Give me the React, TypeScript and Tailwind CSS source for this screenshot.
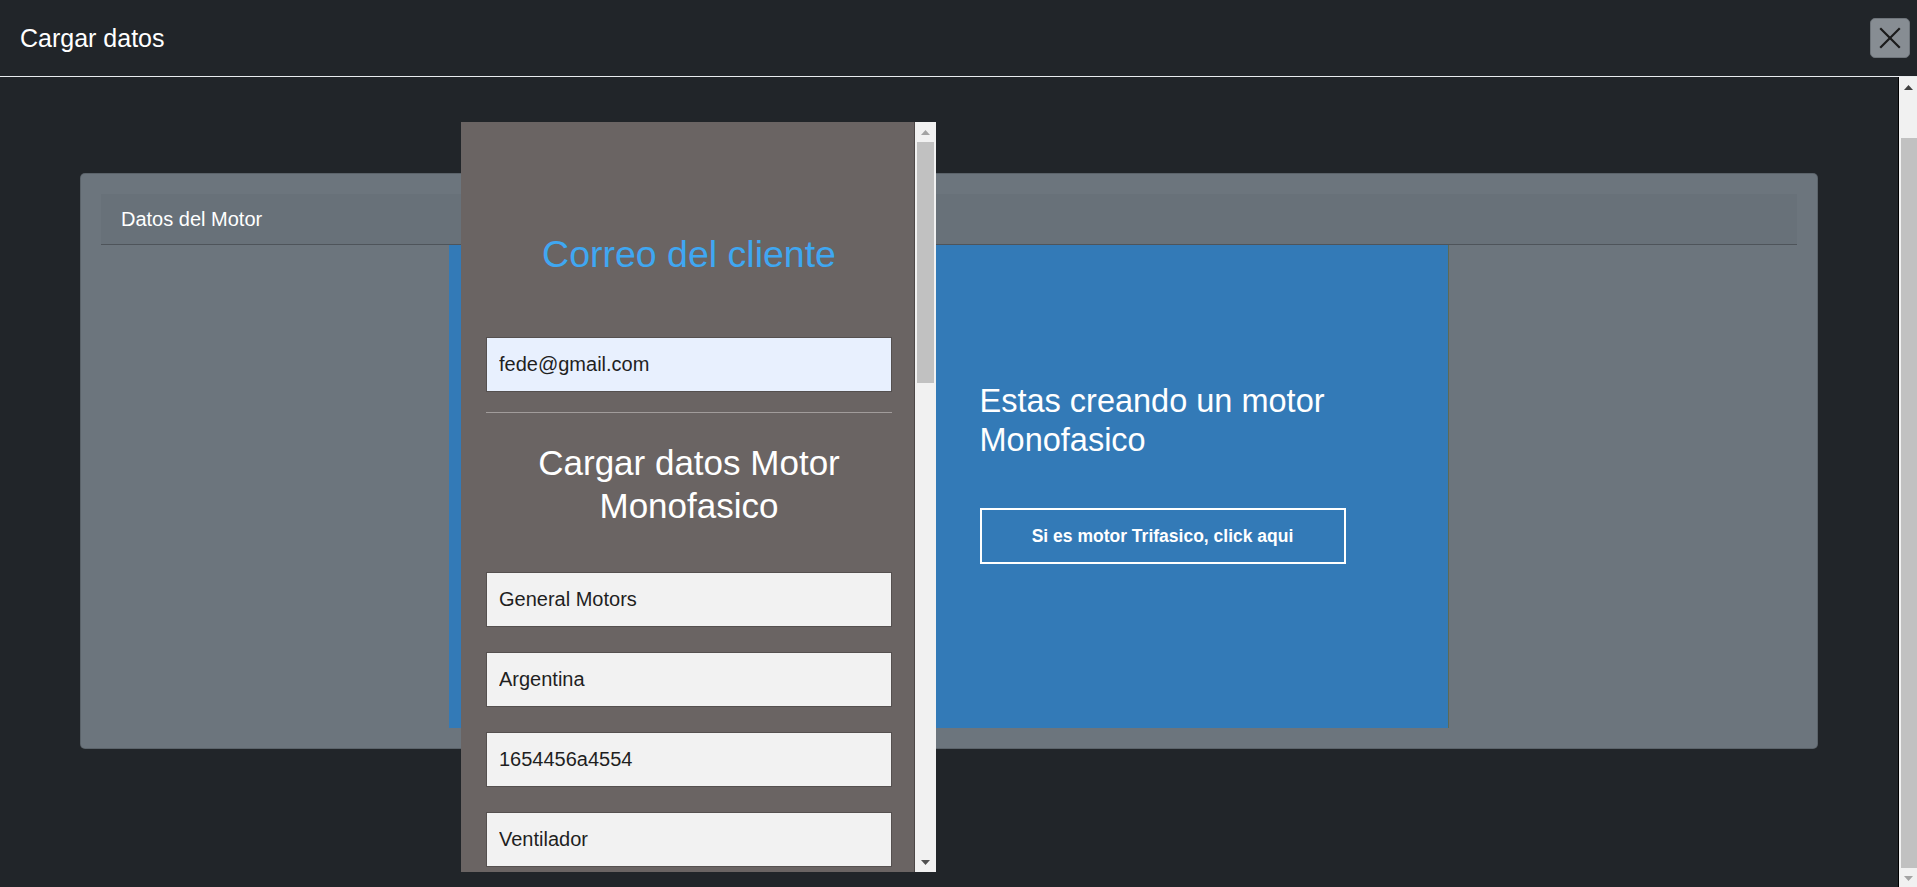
import { useState } from 'react';

const motorFields = ['General Motors', 'Argentina', '1654456a4554', 'Ventilador'];

function Arrow({ dir, color }: { dir: 'up' | 'down'; color: string }) {
  return (
    <svg width="9" height="5" viewBox="0 0 9 5" className="block">
      {dir === 'up' ? <polygon points="0,5 4.5,0 9,5" fill={color} /> : <polygon points="0,0 9,0 4.5,5" fill={color} />}
    </svg>
  );
}

function CloseIcon() {
  return (
    <svg width="22" height="22" viewBox="0 0 22 22" fill="none" stroke="#1b1b1b" strokeWidth="2.2" strokeLinecap="square">
      <line x1="2" y1="2" x2="20" y2="20" />
      <line x1="20" y1="2" x2="2" y2="20" />
    </svg>
  );
}

export default function App() {
  const [email, setEmail] = useState('fede@gmail.com');
  const [values, setValues] = useState(motorFields);

  return (
    <div className="flex h-[887px] w-full flex-col overflow-hidden bg-[#212529] font-['Liberation_Sans',Arial,sans-serif]">
      {/* top bar */}
      <header className="flex h-[77px] shrink-0 items-center justify-between border-b border-[#e9ecef] pl-[20px] pr-[7px]">
        <h1 className="text-[25px] leading-none text-white">Cargar datos</h1>
        <button className="flex h-[40px] w-[40px] items-center justify-center rounded-[5px] border border-[#6f757b] bg-[#878d93]">
          <CloseIcon />
        </button>
      </header>

      <div className="flex min-h-0 flex-1">
        <main className="flex-1 px-[80px] pt-[96px]">
          <section className="rounded-[5px] border border-black/15 bg-[#6c757d] p-[20px]">
            <div className="flex h-[51px] items-center border-b border-black/25 bg-black/[0.03] pl-[20px] text-[20px] text-white">
              Datos del Motor
            </div>

            <div className="relative mx-auto grid h-[483px] w-[1000px] grid-cols-2 border-r border-[#5e6a55] bg-[#337ab7]">
              <div />
              <div className="pl-[31px] pt-[137px]">
                <h2 className="max-w-[420px] text-[32.5px] leading-[39px] text-white">Estas creando un motor Monofasico</h2>
                <button className="mt-[48px] h-[56px] w-[366px] border-2 border-white text-[17.5px] font-bold text-white">
                  Si es motor Trifasico, click aqui
                </button>
              </div>

              {/* floating form panel */}
              <div className="absolute left-[12px] top-[-123px] flex h-[750px] w-[475px] overflow-hidden bg-[#6a6463]">
                <div className="flex-1 pl-[25px] pr-[22px] pt-[110px]">
                  <h3 className="text-center text-[37.5px] leading-[45px] text-[#3fa7f2]">Correo del cliente</h3>
                  <input
                    value={email}
                    onChange={(e) => setEmail(e.target.value)}
                    className="mt-[60px] block h-[55px] w-full border border-[#55504f] bg-[#e8f0fe] px-[12px] text-[20px] text-[#1f1f1f] outline-none"
                  />
                  <hr className="mt-[20px] border-t border-[#a19c9b]" />
                  <h3 className="mt-[28px] text-center text-[35px] leading-[43px] text-white">
                    Cargar datos Motor
                    <br />
                    Monofasico
                  </h3>
                  <div className="mt-[45px] flex flex-col gap-[25px]">
                    {values.map((v, i) => (
                      <input
                        key={i}
                        value={v}
                        onChange={(e) => setValues(values.map((x, j) => (j === i ? e.target.value : x)))}
                        className="block h-[55px] w-full shrink-0 border border-[#55504f] bg-[#f2f2f2] px-[12px] text-[20px] text-[#1f1f1f] outline-none"
                      />
                    ))}
                  </div>
                </div>
                {/* panel scrollbar */}
                <div className="flex w-[22px] flex-col border-l border-[#4d4746] bg-[#f1f1f1]">
                  <div className="flex h-[20px] items-center justify-center">
                    <Arrow dir="up" color="#a3a3a3" />
                  </div>
                  <div className="flex-1">
                    <div className="mx-[2px] h-[241px] bg-[#c1c1c1]" />
                  </div>
                  <div className="flex h-[20px] items-center justify-center">
                    <Arrow dir="down" color="#505050" />
                  </div>
                </div>
              </div>
            </div>
          </section>
        </main>

        {/* page scrollbar */}
        <div className="flex w-[19px] flex-col border-l border-black bg-[#f1f1f1]">
          <div className="flex h-[20px] items-center justify-center pl-[1px]">
            <Arrow dir="up" color="#404040" />
          </div>
          <div className="flex-1 pt-[41px]">
            <div className="ml-[2px] h-[730px] bg-[#c1c1c1]" />
          </div>
          <div className="flex h-[18px] items-center justify-center pl-[1px]">
            <Arrow dir="down" color="#a3a3a3" />
          </div>
        </div>
      </div>
    </div>
  );
}
